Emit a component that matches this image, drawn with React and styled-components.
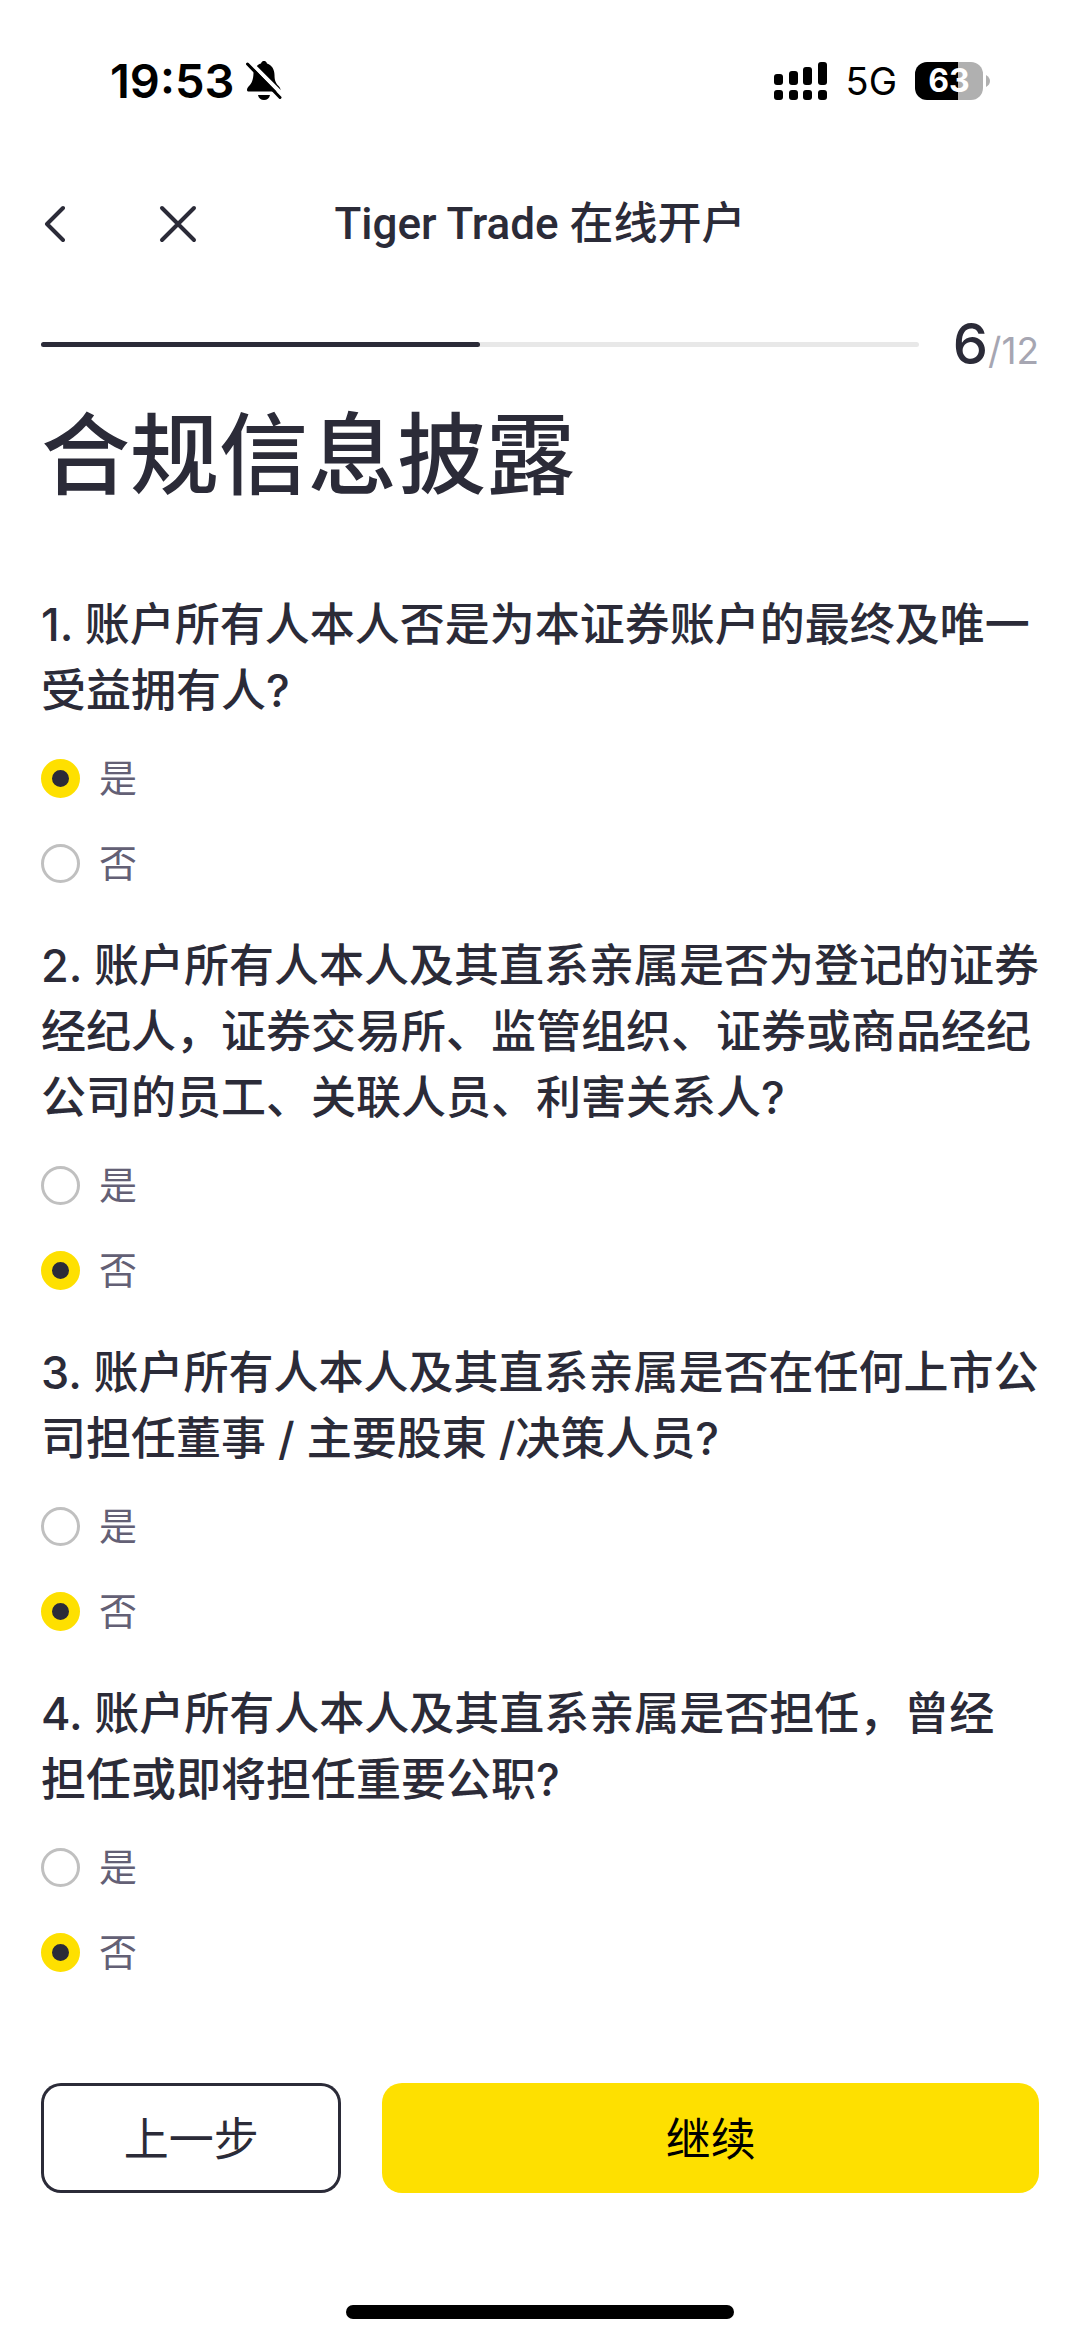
import React, { useState } from "react";
import styled, { createGlobalStyle } from "styled-components";

const questions = [
  {
    id: "beneficiary",
    text: "1. 账户所有人本人否是为本证券账户的最终及唯一受益拥有人?",
    answer: "是",
  },
  {
    id: "broker",
    text: "2. 账户所有人本人及其直系亲属是否为登记的证券经纪人，证券交易所、监管组织、证券或商品经纪公司的员工、关联人员、利害关系人?",
    answer: "否",
  },
  {
    id: "director",
    text: "3. 账户所有人本人及其直系亲属是否在任何上市公司担任董事 / 主要股東 /决策人员?",
    answer: "否",
  },
  {
    id: "office",
    text: "4. 账户所有人本人及其直系亲属是否担任，曾经\n担任或即将担任重要公职?",
    answer: "否",
  },
];

const options = ["是", "否"];

function StatusBar() {
  return (
    <Status>
      <StatusGroup $gap="11px">
        <Clock>19:53</Clock>
        <svg width="38" height="42" viewBox="0 0 38 42" aria-hidden="true">
          <path
            d="M8.500 13C9.500 7 13 4 16 3.400C16.600 1.400 17.800 1 19 1s2.400 .4 3 2.400c5 1.600 7.500 6 7.500 11.600c0 6 1.500 8.500 4.300 11.300c1.200 1.200 1.700 2.600 1.700 3.700c0 1-.7 1.500-1.500 1.500H4c-1.200 0-2-.6-2-1.600c0-1.200 .7-2.500 2-3.900c2.800-2.900 4.300-6.300 4.500-13z"
            fill="#000"
          />
          <path d="M13 35h12c-.6 3.300-3 5-6 5s-5.400-1.700-6-5z" fill="#000" />
          <path d="M4.500 1.500L39 36" stroke="#fff" strokeWidth="4" />
          <path d="M2.500 4L35 37.500" stroke="#000" strokeWidth="3" strokeLinecap="round" />
        </svg>
      </StatusGroup>
      <StatusGroup $gap="18px">
        <svg width="54" height="40" viewBox="0 0 54 40" aria-hidden="true">
          <rect x="0" y="13" width="9" height="11" rx="3" />
          <rect x="15" y="10" width="9" height="14" rx="3" />
          <rect x="29" y="6" width="9" height="18" rx="3" />
          <rect x="44" y="1" width="9" height="23" rx="3" />
          <rect x="0" y="29" width="9" height="10" rx="3" />
          <rect x="15" y="29" width="9" height="10" rx="3" />
          <rect x="29" y="29" width="9" height="10" rx="3" />
          <rect x="44" y="29" width="9" height="10" rx="3" />
        </svg>
        <Network>5G</Network>
        <BatteryWrap>
          <Battery>63</Battery>
          <svg width="4" height="12" viewBox="0 0 4 12" aria-hidden="true">
            <path d="M0 0c2.500 1.500 4 3.500 4 6s-1.500 4.500-4 6z" fill="#b0b0b0" />
          </svg>
        </BatteryWrap>
      </StatusGroup>
    </Status>
  );
}

function Question({ question, value, onChange }) {
  return (
    <Group>
      <Legend>{question.text}</Legend>
      <Options>
        {options.map((option) => (
          <Option key={option}>
            <Radio
              type="radio"
              name={question.id}
              value={option}
              checked={value === option}
              onChange={() => onChange(option)}
            />
            {option}
          </Option>
        ))}
      </Options>
    </Group>
  );
}

function App() {
  const [answers, setAnswers] = useState(
    Object.fromEntries(questions.map((q) => [q.id, q.answer]))
  );
  const step = 6;
  const total = 12;

  return (
    <Page>
      <GlobalStyle />
      <StatusBar />
      <Header>
        <HeaderActions>
          <IconButton type="button" aria-label="返回">
            <svg width="24" height="40" viewBox="0 0 24 40">
              <path d="M22 4L6 20L22 36" />
            </svg>
          </IconButton>
          <IconButton type="button" aria-label="关闭">
            <svg width="40" height="40" viewBox="0 0 40 40">
              <path d="M4 4L36 36M36 4L4 36" />
            </svg>
          </IconButton>
        </HeaderActions>
        <HeaderTitle>Tiger Trade 在线开户</HeaderTitle>
      </Header>
      <Progress>
        <Track>
          <Fill style={{ width: `${(step / total) * 100}%` }} />
        </Track>
        <Count>
          <strong>{step}</strong>/{total}
        </Count>
      </Progress>
      <Main>
        <Title>合规信息披露</Title>
        {questions.map((q) => (
          <Question
            key={q.id}
            question={q}
            value={answers[q.id]}
            onChange={(answer) => setAnswers({ ...answers, [q.id]: answer })}
          />
        ))}
      </Main>
      <Footer>
        <Button type="button">上一步</Button>
        <Button type="button" $primary>
          继续
        </Button>
      </Footer>
      <HomeIndicator />
    </Page>
  );
}

export default App;

const GlobalStyle = createGlobalStyle`
  * {
    box-sizing: border-box;
  }
  body {
    margin: 0;
    background: #fff;
    color: #2b2b38;
    font-family: Inter, "Noto Sans CJK SC", sans-serif;
  }
  svg {
    display: block;
    flex: none;
  }
`;

const Page = styled.div`
  display: flex;
  flex-direction: column;
  min-height: 100vh;
`;

const Status = styled.div`
  display: flex;
  align-items: center;
  justify-content: space-between;
  height: 162px;
  padding: 0 90px 0 110px;
  color: #000;
`;

const StatusGroup = styled.div`
  display: flex;
  align-items: center;
  gap: ${(props) => props.$gap};
`;

const Clock = styled.span`
  font-size: 47px;
  font-weight: 600;
  line-height: 56px;
`;

const Network = styled.span`
  font-size: 38px;
  line-height: 40px;
`;

const BatteryWrap = styled.div`
  display: flex;
  align-items: center;
  gap: 3px;
`;

const Battery = styled.span`
  width: 68px;
  border-radius: 12px;
  background: linear-gradient(to right, #000 63%, #b0b0b0 63%);
  color: #fff;
  font-size: 32px;
  font-weight: 700;
  line-height: 38px;
  text-align: center;
`;

const Header = styled.header`
  display: grid;
  grid-template-columns: 1fr auto 1fr;
  align-items: center;
  height: 124px;
  padding: 0 41px;
`;

const HeaderActions = styled.div`
  display: flex;
  gap: 93px;
`;

const IconButton = styled.button`
  padding: 0;
  border: 0;
  background: none;

  path {
    fill: none;
    stroke: #2b2b38;
    stroke-width: 4;
    stroke-linecap: round;
    stroke-linejoin: round;
  }
`;

const HeaderTitle = styled.h1`
  margin: 0;
  font-family: Roboto, "Noto Sans CJK SC", sans-serif;
  font-size: 44px;
  font-weight: 500;
  line-height: 66px;
`;

const Progress = styled.div`
  display: flex;
  align-items: center;
  gap: 34px;
  height: 116px;
  padding: 0 41px;
`;

const Track = styled.div`
  flex: 1;
  height: 5px;
  border-radius: 3px;
  background: #e8e8e8;
`;

const Fill = styled.div`
  height: 100%;
  border-radius: 3px;
  background: #2b2b38;
`;

const Count = styled.div`
  padding-top: 6px;
  color: #a6a6b2;
  font-size: 37px;
  line-height: 66px;

  strong {
    color: #2b2b38;
    font-size: 56px;
    font-weight: 500;
  }
`;

const Main = styled.main`
  flex: 1;
  padding: 0 36px 0 41px;
`;

const Title = styled.h2`
  margin: 0 0 84px;
  font-size: 89px;
  font-weight: 500;
  line-height: 106px;
`;

const Group = styled.fieldset`
  min-width: 0;
  margin: 0 0 50px;
  padding: 0;
  border: 0;
`;

const Legend = styled.legend`
  margin-bottom: 34px;
  padding: 0;
  font-size: 45px;
  font-weight: 500;
  line-height: 66px;
  white-space: pre-line;
`;

const Options = styled.div`
  display: flex;
  flex-direction: column;
  align-items: flex-start;
  gap: 45px;
`;

const Option = styled.label`
  display: flex;
  align-items: center;
  gap: 19px;
  color: #636075;
  font-size: 38px;
  line-height: 40px;
`;

const Radio = styled.input`
  appearance: none;
  width: 39px;
  height: 39px;
  margin: 0;
  border: 3px solid #c0c0c0;
  border-radius: 50%;

  &:checked {
    border: 11px solid #fee000;
    background: #2b2b38;
  }
`;

const Footer = styled.footer`
  display: flex;
  gap: 41px;
  padding: 0 41px;
`;

const Button = styled.button`
  flex: ${(props) => (props.$primary ? "656 1 0" : "300 1 0")};
  height: 110px;
  padding: 0 0 4px;
  border: 0;
  border-radius: 20px;
  background: ${(props) => (props.$primary ? "#fee000" : "#fff")};
  box-shadow: ${(props) => (props.$primary ? "none" : "inset 0 0 0 3px #2b2b38")};
  color: ${(props) => (props.$primary ? "#000" : "#2b2b38")};
  font-family: inherit;
  font-size: 45px;
`;

const HomeIndicator = styled.div`
  width: 36%;
  height: 14px;
  margin: 112px auto 22px;
  border-radius: 7px;
  background: #000;
`;
